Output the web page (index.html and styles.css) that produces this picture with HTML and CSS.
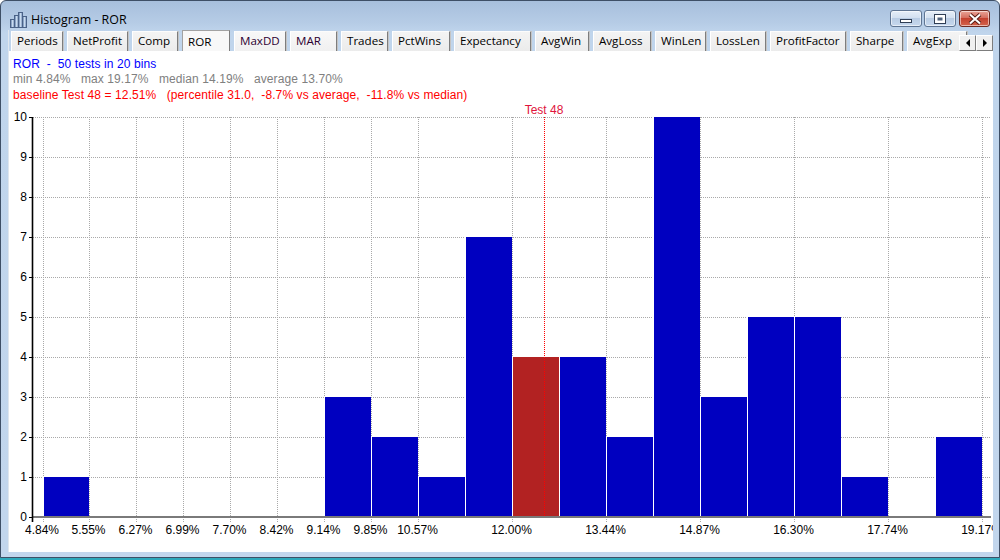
FILE: index.html
```html
<!DOCTYPE html>
<html>
<head>
<meta charset="utf-8">
<title>Histogram - ROR</title>
<link rel="stylesheet" href="styles.css">
</head>
<body>
<div class="window">
  <div class="titlebar">
    <svg class="appicon" width="17" height="16" viewBox="0 0 17 16">
      <defs>
        <linearGradient id="bg1" x1="0" y1="0" x2="1" y2="0">
          <stop offset="0" stop-color="#4d6e9e"/>
          <stop offset="0.5" stop-color="#c9dbef"/>
          <stop offset="1" stop-color="#6f8cb6"/>
        </linearGradient>
      </defs>
      <rect class="ib" x="0.5" y="7.5" width="4" height="8"/>
      <rect class="ib" x="4.5" y="3.5" width="4" height="12"/>
      <rect class="ib" x="8.5" y="0.5" width="4" height="15"/>
      <rect class="ib" x="12.5" y="4.5" width="4" height="11"/>
    </svg>
    <span class="title">Histogram - ROR</span>
    <div class="controls">
      <div class="cbtn cmin">
        <svg width="14" height="10" viewBox="0 0 14 10"><rect class="g" x="1.5" y="5.5" width="11" height="3"/></svg>
      </div>
      <div class="cbtn cmax">
        <svg width="14" height="12" viewBox="0 0 14 12"><rect class="g" x="1.5" y="1.5" width="11" height="9"/><rect class="gi" x="4.5" y="4.5" width="5" height="3"/></svg>
      </div>
      <div class="cbtn cclose">
        <svg width="16" height="12" viewBox="0 0 16 12"><path class="xo" d="M3 1.5 L13 10.5 M13 1.5 L3 10.5"/><path class="xi" d="M3 1.5 L13 10.5 M13 1.5 L3 10.5"/></svg>
      </div>
    </div>
  </div>
  <div class="client">
    <div class="tabstrip">
      <div class="tab w1">Periods</div>
      <div class="tab w2">NetProfit</div>
      <div class="tab w3">Comp</div>
      <div class="tab sel w4">ROR</div>
      <div class="tab w5 hot">MaxDD</div>
      <div class="tab w6 hot">MAR</div>
      <div class="tab w7">Trades</div>
      <div class="tab w8">PctWins</div>
      <div class="tab w9">Expectancy</div>
      <div class="tab w10">AvgWin</div>
      <div class="tab w11">AvgLoss</div>
      <div class="tab w12">WinLen</div>
      <div class="tab w13">LossLen</div>
      <div class="tab w14">ProfitFactor</div>
      <div class="tab w15">Sharpe</div>
      <div class="tab w16">AvgExp</div>
      <div class="scroller">
        <div class="sbtn"><span class="tri tl"></span></div>
        <div class="sbtn"><span class="tri tr"></span></div>
      </div>
    </div>
    <div class="pane">
      <div class="summary">
        <div class="line l1">ROR  -  50 tests in 20 bins</div>
        <div class="line l2">min 4.84%   max 19.17%   median 14.19%   average 13.70%</div>
        <div class="line l3">baseline Test 48 = 12.51%   (percentile 31.0,  -8.7% vs average,  -11.8% vs median)</div>
      </div>
      <svg class="chart" width="985" height="449" viewBox="8 103 985 449">
        <g class="gh">
          <line x1="33" x2="991" y1="117.5" y2="117.5"/>
          <line x1="33" x2="991" y1="157.5" y2="157.5"/>
          <line x1="33" x2="991" y1="197.5" y2="197.5"/>
          <line x1="33" x2="991" y1="237.5" y2="237.5"/>
          <line x1="33" x2="991" y1="277.5" y2="277.5"/>
          <line x1="33" x2="991" y1="317.5" y2="317.5"/>
          <line x1="33" x2="991" y1="357.5" y2="357.5"/>
          <line x1="33" x2="991" y1="397.5" y2="397.5"/>
          <line x1="33" x2="991" y1="437.5" y2="437.5"/>
          <line x1="33" x2="991" y1="477.5" y2="477.5"/>
        </g>
        <g class="gv">
          <line x1="43.5" x2="43.5" y1="117" y2="522"/>
          <line x1="89.5" x2="89.5" y1="117" y2="522"/>
          <line x1="136.5" x2="136.5" y1="117" y2="522"/>
          <line x1="183.5" x2="183.5" y1="117" y2="522"/>
          <line x1="230.5" x2="230.5" y1="117" y2="522"/>
          <line x1="277.5" x2="277.5" y1="117" y2="522"/>
          <line x1="324.5" x2="324.5" y1="117" y2="522"/>
          <line x1="371.5" x2="371.5" y1="117" y2="522"/>
          <line x1="418.5" x2="418.5" y1="117" y2="522"/>
          <line x1="512.5" x2="512.5" y1="117" y2="522"/>
          <line x1="606.5" x2="606.5" y1="117" y2="522"/>
          <line x1="700.5" x2="700.5" y1="117" y2="522"/>
          <line x1="794.5" x2="794.5" y1="117" y2="522"/>
          <line x1="888.5" x2="888.5" y1="117" y2="522"/>
          <line x1="982.5" x2="982.5" y1="117" y2="522"/>
        </g>
        <g class="gaps">
          <rect x="43" y="477" width="1" height="40"/>
          <rect x="324" y="397" width="1" height="120"/>
          <rect x="371" y="437" width="1" height="80"/>
          <rect x="418" y="477" width="1" height="40"/>
          <rect x="465" y="237" width="1" height="280"/>
          <rect x="512" y="357" width="1" height="160"/>
          <rect x="559" y="357" width="1" height="160"/>
          <rect x="606" y="437" width="1" height="80"/>
          <rect x="653" y="117" width="1" height="400"/>
          <rect x="700" y="397" width="1" height="120"/>
          <rect x="747" y="317" width="1" height="200"/>
          <rect x="794" y="317" width="1" height="200"/>
          <rect x="841" y="477" width="1" height="40"/>
          <rect x="935" y="437" width="1" height="80"/>
        </g>
        <g class="bars">
          <rect x="44" y="477" width="45" height="40"/>
          <rect x="325" y="397" width="46" height="120"/>
          <rect x="372" y="437" width="46" height="80"/>
          <rect x="419" y="477" width="46" height="40"/>
          <rect x="466" y="237" width="46" height="280"/>
          <rect class="base" x="513" y="357" width="46" height="160"/>
          <rect x="560" y="357" width="46" height="160"/>
          <rect x="607" y="437" width="46" height="80"/>
          <rect x="654" y="117" width="46" height="400"/>
          <rect x="701" y="397" width="46" height="120"/>
          <rect x="748" y="317" width="46" height="200"/>
          <rect x="795" y="317" width="46" height="200"/>
          <rect x="842" y="477" width="46" height="40"/>
          <rect x="936" y="437" width="46" height="80"/>
        </g>
        <line class="marker" x1="544.5" x2="544.5" y1="117" y2="516"/>
        <text class="mlabel" x="544" y="114">Test 48</text>
        <line class="xaxis" x1="33" x2="991" y1="517" y2="517"/>
        <g class="yticks">
          <line x1="29" x2="32" y1="117.5" y2="117.5"/>
          <line x1="29" x2="32" y1="157.5" y2="157.5"/>
          <line x1="29" x2="32" y1="197.5" y2="197.5"/>
          <line x1="29" x2="32" y1="237.5" y2="237.5"/>
          <line x1="29" x2="32" y1="277.5" y2="277.5"/>
          <line x1="29" x2="32" y1="317.5" y2="317.5"/>
          <line x1="29" x2="32" y1="357.5" y2="357.5"/>
          <line x1="29" x2="32" y1="397.5" y2="397.5"/>
          <line x1="29" x2="32" y1="437.5" y2="437.5"/>
          <line x1="29" x2="32" y1="477.5" y2="477.5"/>
          <line x1="29" x2="32" y1="517.5" y2="517.5"/>
        </g>
        <line class="yaxis" x1="32.5" x2="32.5" y1="117" y2="522"/>
        <g class="ylab">
          <text x="27" y="121">10</text>
          <text x="27" y="161">9</text>
          <text x="27" y="201">8</text>
          <text x="27" y="241">7</text>
          <text x="27" y="281">6</text>
          <text x="27" y="321">5</text>
          <text x="27" y="361">4</text>
          <text x="27" y="401">3</text>
          <text x="27" y="441">2</text>
          <text x="27" y="481">1</text>
          <text x="27" y="521">0</text>
        </g>
        <g class="xlab">
          <text x="42" y="534">4.84%</text>
          <text x="88.5" y="534">5.55%</text>
          <text x="135.5" y="534">6.27%</text>
          <text x="182.5" y="534">6.99%</text>
          <text x="229.5" y="534">7.70%</text>
          <text x="276.5" y="534">8.42%</text>
          <text x="323.5" y="534">9.14%</text>
          <text x="370.5" y="534">9.85%</text>
          <text x="417.5" y="534">10.57%</text>
          <text x="511.5" y="534">12.00%</text>
          <text x="605.5" y="534">13.44%</text>
          <text x="699.5" y="534">14.87%</text>
          <text x="793.5" y="534">16.30%</text>
          <text x="887.5" y="534">17.74%</text>
          <text x="981.5" y="534">19.17%</text>
        </g>
      </svg>
    </div>
  </div>
</div>
</body>
</html>
```

FILE: styles.css
```css
html, body {
  margin: 0;
  padding: 0;
}
body {
  width: 1000px;
  height: 560px;
  overflow: hidden;
  background: linear-gradient(180deg, #ffffff 0, #ffffff 557px, #2ea8bb 557px, #2ea8bb 100%);
  font-family: "Liberation Sans", Arial, sans-serif;
}
.window {
  box-sizing: border-box;
  width: 1000px;
  height: 558px;
  border: 1px solid #3e4f66;
  border-radius: 6px 6px 0 0;
  background: linear-gradient(180deg, #a7bfdc 0, #b6cce6 22px, #c0d5ec 32px, #c2d6ed 100%);
  display: flex;
  flex-direction: column;
  overflow: hidden;
}
.titlebar {
  box-sizing: border-box;
  height: 29px;
  flex: none;
  display: flex;
  align-items: flex-start;
  padding: 10px 9px 0 9px;
}
.appicon {
  flex: none;
  margin-top: 1px;
}
.appicon .ib {
  fill: url(#bg1);
  stroke: #4a6288;
  stroke-width: 1;
}
.title {
  margin-left: 4px;
  font-family: "Open Sans", "Noto Sans", sans-serif;
  font-size: 12.4px;
  line-height: 17px;
  color: #000;
}
.controls {
  margin-left: auto;
  margin-top: -1px;
  display: flex;
}
.cbtn {
  box-sizing: border-box;
  height: 17px;
  width: 32px;
  border: 1px solid #5f7593;
  border-radius: 3px;
  background: linear-gradient(180deg, #e6eef8 0%, #d3e0f0 45%, #b9cce4 50%, #c6d8ee 100%);
  box-shadow: inset 0 0 0 1px rgba(255, 255, 255, 0.55);
  display: flex;
  align-items: center;
  justify-content: center;
}
.cmax {
  margin-left: 2px;
}
.cclose {
  width: 31px;
  margin-left: 3px;
  border-color: #6e2b22;
  background: linear-gradient(180deg, #e9a497 0%, #d66f60 45%, #c4412f 50%, #d4644c 100%);
}
.cbtn .g {
  fill: #ffffff;
  stroke: #2f3e55;
  stroke-width: 1;
}
.cbtn .gi {
  fill: #50637e;
  stroke: none;
}
.xo {
  stroke: #5a2018;
  stroke-width: 4;
  fill: none;
}
.xi {
  stroke: #ffffff;
  stroke-width: 2;
  fill: none;
}
.client {
  flex: 1;
  margin: 0 6px 5px 7px;
  display: flex;
  flex-direction: column;
  min-height: 0;
  border-left: 1px solid #dfe6ee;
}
.tabstrip {
  position: relative;
  height: 21px;
  flex: none;
  display: flex;
  align-items: flex-end;
  gap: 4px;
  padding-left: 2px;
  overflow: hidden;
}
.tab {
  box-sizing: border-box;
  flex: none;
  height: 20px;
  padding-left: 5px;
  border-top: 1px solid #fcfcfc;
  border-left: 1px solid #ffffff;
  border-right: 1px solid #7d7d7d;
  box-shadow: 1px 0 0 #c4c4c4;
  background: linear-gradient(180deg, #f4f4f4 0%, #ebebeb 100%);
  font-family: "Open Sans", "Noto Sans", sans-serif;
  font-size: 11.6px;
  line-height: 18px;
  color: #000;
  white-space: nowrap;
  overflow: hidden;
}
.tab.hot {
  color: #2c0030;
  background: linear-gradient(180deg, #f8f8f8 0%, #f0f0f0 100%);
}
.tab.sel {
  height: 21px;
  padding-top: 2px;
  border-top: 1px solid #a2a2a2;
  border-left: 1px solid #a2a2a2;
  border-right: 1px solid #7d7d7d;
  background: #f8f8f8;
  box-shadow: none;
}
.w1 { width: 52px; }
.w2 { width: 61px; }
.w3 { width: 46px; }
.w4 { width: 48px; }
.w5 { width: 52px; }
.w6 { width: 47px; }
.w7 { width: 47px; }
.w8 { width: 58px; }
.w9 { width: 77px; }
.w10 { width: 54px; }
.w11 { width: 58px; }
.w12 { width: 51px; }
.w13 { width: 56px; }
.w14 { width: 76px; }
.w15 { width: 53px; }
.w16 { width: 60px; }
.scroller {
  position: absolute;
  right: 0;
  bottom: 0;
  display: flex;
  background: #c2d6ed;
}
.sbtn {
  box-sizing: border-box;
  width: 17px;
  height: 16px;
  border-top: 1px solid #ffffff;
  border-left: 1px solid #ffffff;
  border-right: 1px solid #7d7d7d;
  border-bottom: 1px solid #7d7d7d;
  background: #f0f0f0;
  display: flex;
  align-items: center;
  justify-content: center;
}
.tri {
  width: 0;
  height: 0;
  border-top: 4px solid transparent;
  border-bottom: 4px solid transparent;
}
.tl {
  border-right: 4px solid #000;
}
.tr {
  border-left: 4px solid #000;
}
.pane {
  flex: 1;
  background: #ffffff;
  display: flex;
  flex-direction: column;
  overflow: hidden;
}
.summary {
  box-sizing: border-box;
  height: 52px;
  flex: none;
  padding: 6px 0 0 4px;
  font-size: 12px;
  line-height: 15.25px;
  letter-spacing: 0.1px;
}
.line {
  white-space: pre;
}
.l1 { color: #0000ff; }
.l2 { color: #808080; }
.l3 { color: #ff0000; }
.chart {
  display: block;
  flex: none;
  margin-left: -1px;
  font-family: "Liberation Sans", Arial, sans-serif;
  font-size: 12px;
}
.gh line, .gv line {
  stroke: #a9a9a9;
  stroke-width: 1;
  stroke-dasharray: 1 1;
  shape-rendering: crispEdges;
}
.gaps rect {
  fill: #ffffff;
  shape-rendering: crispEdges;
}
.bars rect {
  fill: #0000c0;
  shape-rendering: crispEdges;
}
.bars rect.base {
  fill: #b22222;
}
.marker {
  stroke: #ff0000;
  stroke-width: 1;
  stroke-dasharray: 1 1;
  shape-rendering: crispEdges;
}
.mlabel {
  fill: #e0143c;
  text-anchor: middle;
}
.xaxis {
  stroke: #7a7a7a;
  stroke-width: 2;
  shape-rendering: crispEdges;
}
.yaxis {
  stroke: #000000;
  stroke-width: 1.6;
}
.yticks line {
  stroke: #000000;
  stroke-width: 1;
  shape-rendering: crispEdges;
}
.ylab text {
  fill: #000;
  text-anchor: end;
}
.xlab text {
  fill: #000;
  text-anchor: middle;
}
```
